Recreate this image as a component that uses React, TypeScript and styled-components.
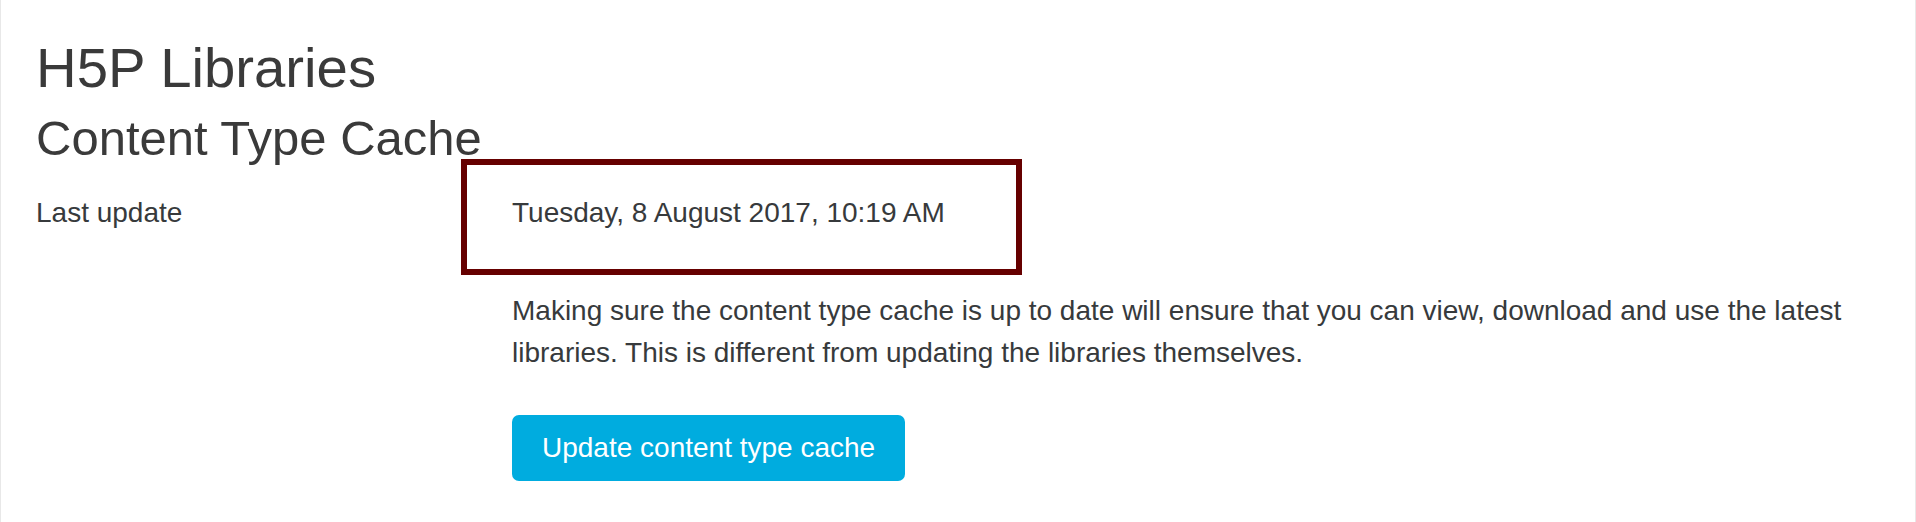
import React from "react";
import styled, { createGlobalStyle } from "styled-components";

const GlobalStyle = createGlobalStyle`
  html, body { margin: 0; padding: 0; background: #ffffff; }
  body {
    font-family: "Liberation Sans", Arial, Helvetica, sans-serif;
    color: #373a3c;
  }
  * { box-sizing: border-box; }
`;

const Page = styled.div`
  min-height: 522px;
  border-left: 1px solid #e8e8e8;
  border-right: 1px solid #e8e8e8;
  padding: 34px 32px 0 35px;
`;

const Title = styled.h2`
  margin: 0 0 7px 0;
  font-size: 56.3px;
  font-weight: 400;
  line-height: 1.2;
  color: #3a3a3a;
`;

const Subtitle = styled.h3`
  margin: 0 0 25px 0;
  font-size: 49px;
  font-weight: 400;
  line-height: 1.2;
  color: #3a3a3a;
`;

const FormRow = styled.div`
  display: grid;
  grid-template-columns: 476px 1fr;
  font-size: 28px;
  line-height: 42px;
`;

const Label = styled.div``;

const Value = styled.div`
  display: flex;
  flex-direction: column;
  align-items: flex-start;
`;

const Highlight = styled.span`
  position: relative;
  display: inline-block;
  &::before {
    content: "";
    position: absolute;
    top: -33px;
    bottom: -41px;
    left: -51px;
    right: -77px;
    border: 6px solid #660000;
    pointer-events: none;
  }
`;

const Description = styled.p`
  margin: 56px 0 0 0;
  max-width: 1390px;
`;

const Button = styled.button`
  margin-top: 41px;
  padding: 12px 30px;
  border: 0;
  border-radius: 7px;
  background: #00acdf;
  color: #ffffff;
  font-family: "Liberation Sans", Arial, Helvetica, sans-serif;
  font-size: 28px;
  line-height: 42px;
  cursor: pointer;
`;

export default function App() {
  return (
    <>
      <GlobalStyle />
      <Page>
        <Title>H5P Libraries</Title>
        <Subtitle>Content Type Cache</Subtitle>
        <FormRow>
          <Label>Last update</Label>
          <Value>
            <Highlight>Tuesday, 8 August 2017, 10:19 AM</Highlight>
            <Description>
              Making sure the content type cache is up to date will ensure that you can view, download and use the latest
              libraries. This is different from updating the libraries themselves.
            </Description>
            <Button type="button">Update content type cache</Button>
          </Value>
        </FormRow>
      </Page>
    </>
  );
}
